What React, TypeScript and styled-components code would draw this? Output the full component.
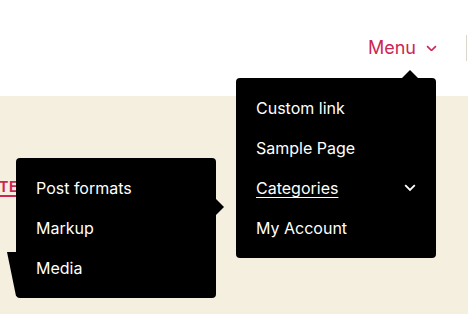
import React from 'react';
import styled, { createGlobalStyle } from 'styled-components';

const COLOR = {
  accent: '#cd2653',
  beige: '#f5efe0',
  black: '#000000',
  white: '#ffffff',
  line: '#dcd7ca'
};

const GlobalStyle = createGlobalStyle`
  html, body {
    margin: 0;
    padding: 0;
    width: 468px;
    height: 314px;
    overflow: hidden;
    background: ${COLOR.beige};
    font-family: Inter, "Noto Sans", sans-serif;
    -webkit-font-smoothing: antialiased;
  }
`;

const S = {
  Wrapper: styled.div`
    position: relative;
    width: 468px;
    height: 314px;
    overflow: hidden;
  `,
  Header: styled.header`
    position: relative;
    z-index: 2;
    display: flex;
    justify-content: flex-end;
    align-items: center;
    height: 96px;
    padding-right: 1px;
    background-color: ${COLOR.white};
  `,
  NavItem: styled.div`
    position: relative;
  `,
  Toggle: styled.button`
    display: flex;
    align-items: center;
    gap: 10px;
    height: 24px;
    margin: 0;
    padding: 0;
    border: 0;
    background: none;
    color: ${COLOR.accent};
    font-family: Inter, sans-serif;
    font-size: 18px;
    line-height: 24px;
    cursor: pointer;
  `,
  Separator: styled.span`
    width: 1px;
    height: 26px;
    margin-left: 29px;
    background-color: ${COLOR.line};
  `,
  Dropdown: styled.ul`
    position: absolute;
    top: calc(100% + 18px);
    right: 1px;
    width: 200px;
    margin: 0;
    padding: 10px 0;
    list-style: none;
    background-color: ${COLOR.black};
    border-radius: 4px;

    &::before {
      content: '';
      position: absolute;
      top: -8px;
      right: 18px;
      border: 8px solid transparent;
      border-top: 0;
      border-bottom-color: ${COLOR.black};
    }
  `,
  SubMenu: styled.ul`
    position: absolute;
    top: -10px;
    right: calc(100% + 20px);
    width: 200px;
    margin: 0;
    padding: 10px 0;
    list-style: none;
    background-color: ${COLOR.black};
    border-radius: 4px;

    &::after {
      content: '';
      position: absolute;
      top: calc(50% - 29px);
      right: -8px;
      border: 8px solid transparent;
      border-right: 0;
      border-left-color: ${COLOR.black};
    }
  `,
  Item: styled.li`
    position: relative;
    display: flex;
    justify-content: space-between;
    align-items: center;
    height: 40px;
    padding: 0 20px;
    color: ${COLOR.white};
    font-size: 16px;
  `,
  ItemLabel: styled.span<{ $underline?: boolean }>`
    text-decoration: ${({ $underline }) => ($underline ? 'underline' : 'none')};
    text-underline-offset: 3px;
    text-decoration-thickness: 1px;
  `,
  Page: styled.main`
    position: relative;
    z-index: 1;
    padding-top: 80px;
  `,
  Category: styled.a`
    display: inline-block;
    margin-left: -43px;
    color: ${COLOR.accent};
    font-size: 14px;
    font-weight: 700;
    letter-spacing: 0.036em;
    text-transform: uppercase;
    text-decoration: underline;
    text-underline-offset: 3px;
    text-decoration-thickness: 2px;
  `,
  Wedge: styled.div`
    position: absolute;
    top: 156px;
    left: 7px;
    width: 10px;
    height: 44px;
    background-color: ${COLOR.black};
    clip-path: polygon(0 0, 100% 0, 100% 100%, 90% 100%);
  `
};

const Chevron = ({ color, size = 12 }: { color: string; size?: number }) => (
  <svg width={size} height={size * 0.6} viewBox="0 0 20 12" fill="none">
    <path d="M2 2 L10 10 L18 2" stroke={color} strokeWidth="3" />
  </svg>
);

const subItems = ['Post formats', 'Markup', 'Media'];

const App = () => {
  return (
    <>
      <GlobalStyle />
      <S.Wrapper>
        <S.Header>
          <S.NavItem>
            <S.Toggle>
              Menu
              <Chevron color={COLOR.accent} size={11} />
            </S.Toggle>
            <S.Dropdown>
              <S.Item>
                <S.ItemLabel>Custom link</S.ItemLabel>
              </S.Item>
              <S.Item>
                <S.ItemLabel>Sample Page</S.ItemLabel>
              </S.Item>
              <S.Item>
                <S.ItemLabel $underline>Categories</S.ItemLabel>
                <Chevron color={COLOR.white} size={12} />
                <S.SubMenu>
                  {subItems.map((label) => (
                    <S.Item key={label}>
                      <S.ItemLabel>{label}</S.ItemLabel>
                    </S.Item>
                  ))}
                </S.SubMenu>
              </S.Item>
              <S.Item>
                <S.ItemLabel>My Account</S.ItemLabel>
              </S.Item>
            </S.Dropdown>
          </S.NavItem>
          <S.Separator />
        </S.Header>
        <S.Page>
          <S.Category href="#">Uncategorized</S.Category>
          <S.Wedge />
        </S.Page>
      </S.Wrapper>
    </>
  );
};

export default App;
